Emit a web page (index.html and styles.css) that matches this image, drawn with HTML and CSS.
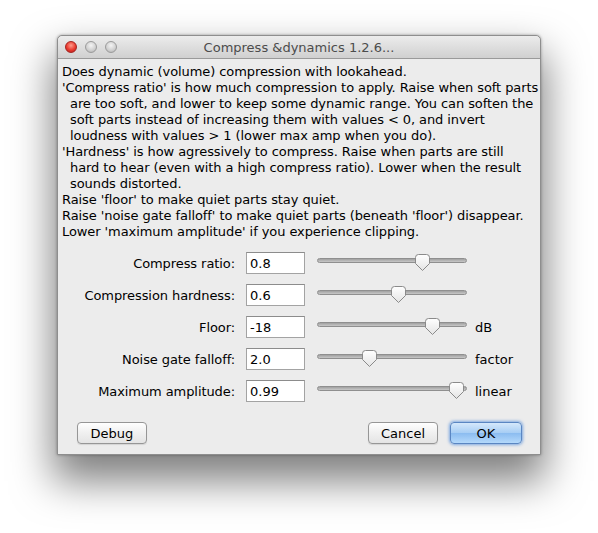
FILE: index.html
```html
<!DOCTYPE html>
<html>
<head>
<meta charset="utf-8">
<link rel="stylesheet" href="styles.css">
</head>
<body>
<div class="window">
  <div class="titlebar">
    <div class="lights">
      <span class="light red"></span>
      <span class="light gray"></span>
      <span class="light gray"></span>
    </div>
    <div class="title">Compress &amp;dynamics 1.2.6...</div>
  </div>
  <div class="content">
    <div class="desc">
      <div>Does dynamic (volume) compression with lookahead.</div>
      <div>'Compress ratio' is how much compression to apply. Raise when soft parts</div>
      <div class="ind">are too soft, and lower to keep some dynamic range. You can soften the</div>
      <div class="ind">soft parts instead of increasing them with values &lt; 0, and invert</div>
      <div class="ind">loudness with values &gt; 1 (lower max amp when you do).</div>
      <div>'Hardness' is how agressively to compress. Raise when parts are still</div>
      <div class="ind">hard to hear (even with a high compress ratio). Lower when the result</div>
      <div class="ind">sounds distorted.</div>
      <div>Raise 'floor' to make quiet parts stay quiet.</div>
      <div>Raise 'noise gate falloff' to make quiet parts (beneath 'floor') disappear.</div>
      <div>Lower 'maximum amplitude' if you experience clipping.</div>
    </div>
    <div class="form">
      <label class="lbl">Compress ratio:</label>
      <div class="field">0.8</div>
      <div class="slider"><div class="track"></div><svg class="thumb" style="left:105px" width="17" height="19" viewBox="0 0 17 19"><defs><linearGradient id="g" x1="0" y1="0" x2="0" y2="1"><stop offset="0" stop-color="#ffffff"/><stop offset="1" stop-color="#e4e4e4"/></linearGradient></defs><path d="M1.5 4.5 Q1.5 1.5 4.5 1.5 H12.5 Q15.5 1.5 15.5 4.5 V10.5 L8.5 17.5 L1.5 10.5 Z" fill="url(#g)" stroke="#8a8a8a"/></svg></div>
      <div class="unit"></div>

      <label class="lbl">Compression hardness:</label>
      <div class="field">0.6</div>
      <div class="slider"><div class="track"></div><svg class="thumb" style="left:81px" width="17" height="19" viewBox="0 0 17 19"><path d="M1.5 4.5 Q1.5 1.5 4.5 1.5 H12.5 Q15.5 1.5 15.5 4.5 V10.5 L8.5 17.5 L1.5 10.5 Z" fill="url(#g)" stroke="#8a8a8a"/></svg></div>
      <div class="unit"></div>

      <label class="lbl">Floor:</label>
      <div class="field">-18</div>
      <div class="slider"><div class="track"></div><svg class="thumb" style="left:115px" width="17" height="19" viewBox="0 0 17 19"><path d="M1.5 4.5 Q1.5 1.5 4.5 1.5 H12.5 Q15.5 1.5 15.5 4.5 V10.5 L8.5 17.5 L1.5 10.5 Z" fill="url(#g)" stroke="#8a8a8a"/></svg></div>
      <div class="unit">dB</div>

      <label class="lbl">Noise gate falloff:</label>
      <div class="field">2.0</div>
      <div class="slider"><div class="track"></div><svg class="thumb" style="left:52px" width="17" height="19" viewBox="0 0 17 19"><path d="M1.5 4.5 Q1.5 1.5 4.5 1.5 H12.5 Q15.5 1.5 15.5 4.5 V10.5 L8.5 17.5 L1.5 10.5 Z" fill="url(#g)" stroke="#8a8a8a"/></svg></div>
      <div class="unit">factor</div>

      <label class="lbl">Maximum amplitude:</label>
      <div class="field">0.99</div>
      <div class="slider"><div class="track"></div><svg class="thumb" style="left:139px" width="17" height="19" viewBox="0 0 17 19"><path d="M1.5 4.5 Q1.5 1.5 4.5 1.5 H12.5 Q15.5 1.5 15.5 4.5 V10.5 L8.5 17.5 L1.5 10.5 Z" fill="url(#g)" stroke="#8a8a8a"/></svg></div>
      <div class="unit">linear</div>
    </div>
    <div class="buttons">
      <button class="btn">Debug</button>
      <div class="spacer"></div>
      <button class="btn">Cancel</button>
      <button class="btn primary">OK</button>
    </div>
  </div>
</div>
</body>
</html>
```

FILE: styles.css
```css
html, body {
  margin: 0;
  padding: 0;
}
html {
  background: #ffffff;
}
body {
  padding: 35px 0 80px 57px;
  font-family: "DejaVu Sans", "Open Sans", sans-serif;
  color: #000;
}
.window {
  width: 484px;
  height: 420px;
  box-sizing: border-box;
  background: #ececec;
  border: 1px solid #8e8e8e;
  border-radius: 5px 5px 0 0;
  box-shadow: 0 22px 40px 4px rgba(0,0,0,0.5), 0 0 3px rgba(0,0,0,0.35);
  display: flex;
  flex-direction: column;
}
.titlebar {
  height: 22px;
  flex: none;
  display: flex;
  align-items: center;
  background: linear-gradient(#ececec, #d0d0d0);
  border-bottom: 1px solid #9a9a9a;
  border-radius: 5px 5px 0 0;
}
.lights {
  display: flex;
  gap: 8px;
  padding-left: 7px;
  width: 52px;
}
.light {
  width: 12px;
  height: 12px;
  border-radius: 50%;
  box-sizing: border-box;
}
.light.red {
  background: radial-gradient(circle at 50% 35%, #ff9b8c 0%, #ea3b2f 55%, #b3191a 100%);
  border: 1px solid #a5231f;
}
.light.gray {
  background: radial-gradient(circle at 50% 35%, #f4f4f4 0%, #cfcfcf 60%, #aaaaaa 100%);
  border: 1px solid #9b9b9b;
}
.title {
  flex: 1;
  text-align: center;
  font-size: 13px;
  color: #4c4c4c;
  margin-right: 59px;
}
.content {
  flex: 1;
  display: flex;
  flex-direction: column;
  padding: 5px 0 0 4px;
}
.desc {
  font-size: 13px;
  line-height: 16px;
  white-space: nowrap;
  letter-spacing: -0.08px;
}
.desc .ind {
  padding-left: 8px;
}
.form {
  margin-top: 12px;
  display: grid;
  grid-template-columns: 172px 59px 150px auto;
  column-gap: 12px;
  row-gap: 10px;
  align-items: center;
  font-size: 13px;
}
.lbl {
  text-align: right;
  margin-right: -1px;
  letter-spacing: -0.08px;
}
.field {
  height: 22px;
  box-sizing: border-box;
  background: #fff;
  border: 1px solid #a3a3a3;
  border-top-color: #8c8c8c;
  padding: 2px 3px;
  line-height: 17px;
  font-size: 13px;
}
.slider {
  position: relative;
  height: 22px;
}
.track {
  position: absolute;
  left: 0;
  right: 0;
  top: 6px;
  height: 5px;
  border-radius: 3px;
  background: linear-gradient(#a0a0a0, #c8c8c8);
  border: 1px solid #8f8f8f;
  box-sizing: border-box;
}
.thumb {
  position: absolute;
  top: 1px;
  margin-left: -8.5px;
}
.unit {
  margin-left: -4px;
}
.buttons {
  display: flex;
  align-items: center;
  margin-top: 20px;
  padding: 0 18px 0 15px;
}
.spacer { flex: 1; }
.btn {
  font-family: "DejaVu Sans", sans-serif;
  font-size: 13px;
  height: 22px;
  width: 70px;
  border: 1px solid #969696;
  border-radius: 4px;
  background: linear-gradient(#ffffff, #f0f0f0 50%, #e4e4e4);
  color: #000;
  padding: 0;
  box-shadow: 0 1px 1px rgba(0,0,0,0.1);
}
.btn.primary {
  margin-left: 12px;
  width: 72px;
  border-color: #5a86c2;
  background: linear-gradient(#d5e8fb, #a6cdf4 50%, #8bbcf0 51%, #b4d9fb);
  box-shadow: 0 0 3px 1px rgba(80,140,220,0.7);
}
```
